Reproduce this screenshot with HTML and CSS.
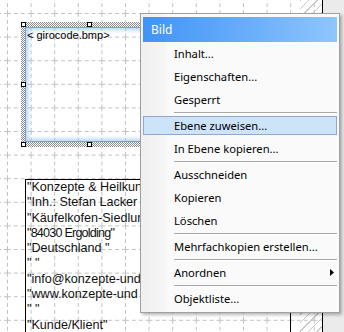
FILE: index.html
```html
<!DOCTYPE html>
<html lang="de">
<head>
<meta charset="utf-8">
<title>Designer</title>
<link rel="stylesheet" href="styles.css">
</head>
<body>
<div class="stage">
  <div class="page">
    <div class="margin-hatch"></div>
    <svg class="grid" width="322" height="332" xmlns="http://www.w3.org/2000/svg">
      <defs>
        <pattern id="cell" x="7" y="13" width="23.6" height="23.6" patternUnits="userSpaceOnUse">
          <path d="M0.5 0V23.6" stroke="#c2c2c2" stroke-width="1" stroke-dasharray="4 3" shape-rendering="crispEdges"/>
          <path d="M0 0.5H23.6" stroke="#c2c2c2" stroke-width="1" stroke-dasharray="4 3" shape-rendering="crispEdges"/>
        </pattern>
      </defs>
      <rect width="322" height="332" fill="url(#cell)"/>
    </svg>

    <div class="obj img-obj">
      <div class="img-inner">
        <span class="img-label">&lt; girocode.bmp&gt;</span>
      </div>
      <span class="handle h-tl"></span>
      <span class="handle h-tm"></span>
      <span class="handle h-ml"></span>
      <span class="handle h-bl"></span>
      <span class="handle h-bm"></span>
    </div>

    <div class="obj text-obj">
      <div class="line">"Konzepte &amp; Heilkun</div>
      <div class="line">"Inh.: Stefan Lacker</div>
      <div class="line">"Käufelkofen-Siedlun</div>
      <div class="line tight">"84030 Ergolding"</div>
      <div class="line">"Deutschland "</div>
      <div class="line">" "</div>
      <div class="line">"info@konzepte-und</div>
      <div class="line">"www.konzepte-und</div>
      <div class="line">" "</div>
      <div class="line">"Kunde/Klient"</div>
    </div>
  </div>

  <div class="menu">
    <div class="menu-title">Bild</div>
    <div class="item">Inhalt...</div>
    <div class="item">Eigenschaften...</div>
    <div class="item">Gesperrt</div>
    <div class="sep"></div>
    <div class="item active">Ebene zuweisen...</div>
    <div class="item">In Ebene kopieren...</div>
    <div class="sep"></div>
    <div class="item">Ausschneiden</div>
    <div class="item">Kopieren</div>
    <div class="item">Löschen</div>
    <div class="sep"></div>
    <div class="item">Mehrfachkopien erstellen...</div>
    <div class="sep"></div>
    <div class="item has-sub">Anordnen
      <svg class="sub-arrow" width="4" height="7" viewBox="0 0 4 7"><path d="M0 0L4 3.5L0 7Z" fill="#000"/></svg>
    </div>
    <div class="sep"></div>
    <div class="item">Objektliste...</div>
  </div>
</div>
</body>
</html>
```

FILE: styles.css
```css
html, body {
  margin: 0;
  padding: 0;
  background: #ebebeb;
}

.stage {
  position: relative;
  width: 344px;
  height: 332px;
  overflow: hidden;
  background: #ebebeb;
}

.page {
  position: relative;
  width: 322px;
  height: 332px;
  background: #fff;
  border-right: 1px solid #000;
}

.margin-hatch {
  position: absolute;
  left: 300px;
  top: 0;
  width: 22px;
  height: 100%;
  background: repeating-linear-gradient(135deg, #c8c8c8 0 1px, transparent 1px 6px);
}

.grid {
  position: absolute;
  left: 0;
  top: 0;
  display: block;
}

.obj {
  position: absolute;
  box-sizing: border-box;
}

/* picture object with selection frame */
.img-obj {
  left: 21px;
  top: 22px;
  width: 137px;
  height: 125px;
  padding: 5px 4px;
  display: flex;
}

.img-obj::before {
  content: "";
  position: absolute;
  inset: 0;
  padding: 5px 4px;
  box-sizing: border-box;
  background: repeating-conic-gradient(#8a8a8a 0 25%, #ffffff 0 50%) 0 0 / 2px 2px;
  -webkit-mask: linear-gradient(#000 0 0) content-box, linear-gradient(#000 0 0);
  -webkit-mask-composite: xor;
  mask-composite: exclude;
}

.img-inner {
  position: relative;
  flex: 1;
  border: 1px solid #7c9fcf;
  box-shadow: inset 0 0 4px 2px rgba(150, 195, 245, 0.75);
  padding: 1px 1px;
}

.img-label {
  display: block;
  font: 11px/13px "Liberation Sans", Arial, sans-serif;
  color: #000;
  white-space: nowrap;
}

.handle {
  position: absolute;
  width: 5px;
  height: 5px;
  box-sizing: border-box;
  border: 1px solid #000;
  background: #fff;
}
.h-tl { left: 0; top: 0; }
.h-tm { left: 66px; top: 0; }
.h-ml { left: 0; top: 60px; }
.h-bl { left: 0; top: 120px; }
.h-bm { left: 66px; top: 120px; }

/* address text object */
.text-obj {
  left: 25px;
  top: 179px;
  width: 266px;
  height: 200px;
  border: 1px solid #000;
  padding-left: 1px;
  overflow: hidden;
  font: 12.6px/15.3px "Liberation Sans", Arial, sans-serif;
  color: #111;
}

.line {
  white-space: pre;
}

.line.tight {
  letter-spacing: -0.8px;
}

/* context menu */
.menu {
  position: absolute;
  left: 140px;
  top: 13px;
  width: 200px;
  height: 300px;
  box-sizing: border-box;
  z-index: 5;
  padding: 3px 2px 2px 2px;
  border: 1px solid #a0a0a0;
  background: linear-gradient(to right, #efefef 0, #f6f6f6 24px, #fafafa 27px, #fafafa 100%);
  box-shadow: 2px 2px 3px rgba(0, 0, 0, 0.28);
  font: 11.2px "Noto Sans", "Open Sans", sans-serif;
  color: #000;
}

.menu-title {
  height: 25px;
  box-sizing: border-box;
  padding-left: 8px;
  display: flex;
  align-items: center;
  color: #fff;
  font-size: 12px;
  background: linear-gradient(to right, #3f94f6 0%, #6aaefa 55%, #8fc6fd 100%);
}

.item {
  position: relative;
  height: 23px;
  box-sizing: border-box;
  padding-left: 31px;
  display: flex;
  align-items: center;
  white-space: nowrap;
}

.item.active {
  height: 19px;
  margin: 2px 0;
  padding-left: 30px;
  border: 1px solid #8ea9cc;
  background: #cde4f8;
}

.sub-arrow {
  position: absolute;
  right: 3px;
  top: 8px;
}

.sep {
  margin: 1px 0 0 31px;
  border-top: 1px solid #a8a8a8;
  border-bottom: 1px solid #ffffff;
  box-sizing: content-box;
  height: 0;
}
```
